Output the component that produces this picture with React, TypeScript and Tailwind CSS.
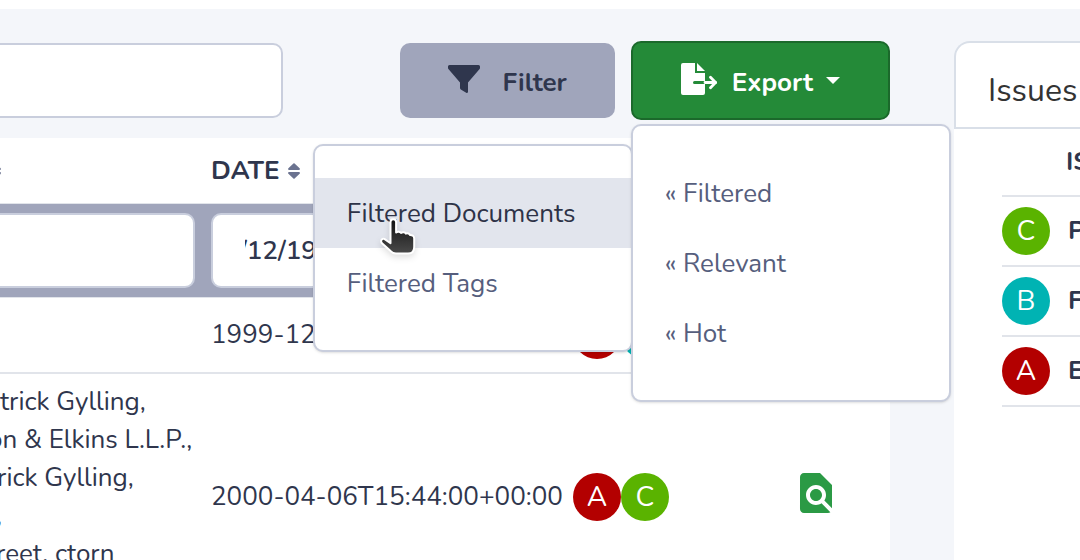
import clsx from "clsx";
import { MdFindInPage } from "react-icons/md";

type Letter = "A" | "B" | "C";

const badgeColors: Record<Letter, string> = {
    A: "bg-[#b30000]",
    B: "bg-[#00b3b3]",
    C: "bg-[#5ab300]",
};

const recipients = [
    { text: "trick Gylling,", className: "" },
    { text: "on & Elkins L.L.P.,", className: "-ml-3" },
    { text: "trick Gylling,", className: "-ml-3" },
    { text: ",", className: "-ml-1" },
    { text: "reet, ctorn", className: "-ml-1" },
];

const issues: { letter: Letter; name: string }[] = [
    { letter: "C", name: "Privileged" },
    { letter: "B", name: "Fraud" },
    { letter: "A", name: "Evidence" },
];

function Badge({ letter }: { letter: Letter }) {
    return (
        <span className={clsx("flex size-12 shrink-0 items-center justify-center rounded-full text-[28px] leading-none text-white", badgeColors[letter])}>
            {letter}
        </span>
    );
}

function SortIcon({ className }: { className?: string }) {
    return (
        <svg viewBox="0 0 12 16" className={clsx("h-4 w-3 shrink-0 fill-[#6b7390]", className)} aria-hidden="true">
            <path d="M5.4.4a1 1 0 0 1 1.2 0l5 4.8c.7.8.3 1.8-.6 1.8H1C.1 7-.3 6 .4 5.2z" />
            <path d="M5.4 15.6a1 1 0 0 0 1.2 0l5-4.8c.7-.8.3-1.8-.6-1.8H1c-.9 0-1.3 1-.6 1.8z" />
        </svg>
    );
}

function FilterIcon() {
    return (
        <svg viewBox="0 0 32 28" className="-mt-1 h-7 w-8 shrink-0 fill-current" aria-hidden="true">
            <path d="M1.6 0h28.8C31.4 0 32 .8 32 1.7v1c0 .5-.1.9-.4 1.3L20 17.600v9.200c0 1-1 1.500-1.800 1l-5.400-3.300c-.5-.3-.8-.8-.8-1.400v-5.500L.4 4C.1 3.600 0 3.200 0 2.700v-1C0 .8.6 0 1.600 0z" />
        </svg>
    );
}

function ExportIcon() {
    return (
        <svg viewBox="0 0 36 32" className="-mt-1 h-8 w-9 shrink-0" aria-hidden="true">
            <path d="M2 0h12v10h10v8H13.500a1.500 1.500 0 0 0 0 3H24v9a2 2 0 0 1-2 2H2a2 2 0 0 1-2-2V2a2 2 0 0 1 2-2z" fill="currentColor" />
            <path d="M16 0l8 8h-8z" fill="currentColor" />
            <path d="M24 19.500h11M29.500 14.200l5 5.300-5 5.300" fill="none" stroke="currentColor" strokeWidth="2.800" strokeLinecap="round" strokeLinejoin="round" />
        </svg>
    );
}

function HandCursor() {
    return (
        <svg viewBox="0 0 40 44" className="pointer-events-none absolute top-[70px] left-[64px] h-11 w-10 drop-shadow-md" aria-hidden="true">
            <defs>
                <linearGradient id="hand" x1="0" y1="0" x2="0" y2="1">
                    <stop offset="0" stopColor="#111" />
                    <stop offset="1" stopColor="#4a4a4a" />
                </linearGradient>
            </defs>
            <path
                d="M11.500 6a2.800 2.800 0 0 1 5.600 0v10.500c1.300-1.200 3.800-1.100 4.900.4 1.500-1 4-.7 4.900.7 1.600-.7 3.500 0 4 1.300 2.300-.1 4.300 1.200 4.300 3.600V31c0 4.200-2.300 6.500-6.200 6.500H17c-2.300 0-4-.8-5.400-2.400L3 27.200c-1.900-1.800-.5-5 2.300-4.300l6.200 4.300z"
                fill="url(#hand)"
                stroke="#fff"
                strokeWidth="2"
                strokeLinejoin="round"
            />
        </svg>
    );
}

function ExportMenu() {
    return (
        <div className="relative z-10">
            <button type="button" className="flex h-[79px] items-center rounded-[10px] border-2 border-[#1b692b] bg-[#248a38] px-12 text-[26px] font-bold text-white">
                <ExportIcon />
                <span className="ml-[15px] pt-1">Export</span>
                <span className="ml-[13px] border-x-[7px] border-t-[7px] border-x-transparent border-t-white" />
            </button>

            <div className="absolute top-full right-full mt-6 -mr-0.5 w-80 rounded-[10px] border-2 border-[#c9cedd] bg-white py-8 shadow-sm">
                <a href="#documents" className="block h-[70px] bg-[#e2e5ed] px-8 leading-[72px] text-[#2e3347]">Filtered Documents</a>
                <a href="#tags" className="block h-[70px] px-8 leading-[72px] text-[#565e7d]">Filtered Tags</a>
                <HandCursor />
            </div>

            <div className="absolute top-full left-0 mt-1 w-80 rounded-[10px] border-2 border-[#c9cedd] bg-white py-8 text-[#565e7d] shadow-sm">
                <a href="#filtered" className="block h-[70px] px-8 leading-[72px]">« Filtered</a>
                <a href="#relevant" className="block h-[70px] px-8 leading-[72px]">« Relevant</a>
                <a href="#hot" className="block h-[70px] px-8 leading-[72px]">« Hot</a>
            </div>
        </div>
    );
}

function DocumentsTable() {
    return (
        <table className="w-full table-fixed border-separate border-spacing-0 bg-white">
            <colgroup>
                <col className="w-[211px]" />
                <col className="w-[362px]" />
                <col />
                <col className="w-[106px]" />
            </colgroup>
            <thead>
                <tr className="h-[66px] text-left">
                    <th className="border-b border-[#e1e4ea] px-2"><SortIcon className="-ml-[11px]" /></th>
                    <th className="border-b border-[#e1e4ea] px-2">
                        <span className="flex items-center gap-[9px]">DATE <SortIcon /></span>
                    </th>
                    <th className="border-b border-[#e1e4ea]" />
                    <th className="border-b border-[#e1e4ea]" />
                </tr>
                <tr className="bg-[#a0a5bb]">
                    <td className="border-b border-[#e1e4ea] px-2 py-[9px]">
                        <input aria-label="Recipient" className="-ml-4 block h-[75px] w-[calc(100%+16px)] rounded-[10px] border-2 border-[#c9cedd] bg-white px-8" />
                    </td>
                    <td className="border-b border-[#e1e4ea] px-2 py-[9px]">
                        <input aria-label="Date" defaultValue="/12/1999" className="block h-[75px] w-full rounded-[10px] border-2 border-[#c9cedd] bg-white px-8 -indent-[6px] font-semibold" />
                    </td>
                    <td className="border-b border-[#e1e4ea]" />
                    <td className="border-b border-[#e1e4ea]" />
                </tr>
            </thead>
            <tbody>
                <tr className="h-[76px]">
                    <td className="border-b-2 border-[#e1e4ea]" />
                    <td className="border-b-2 border-[#e1e4ea] px-2 whitespace-nowrap">1999-12-10T08:00:00+00:00</td>
                    <td className="border-b-2 border-[#e1e4ea] px-2">
                        <div className="flex"><Badge letter="A" /><Badge letter="B" /></div>
                    </td>
                    <td className="border-b-2 border-[#e1e4ea]" />
                </tr>
                <tr className="h-[246px]">
                    <td className="px-2 pt-[9px] align-top leading-[38px] whitespace-nowrap">
                        {recipients.map((line, i) => (
                            <div key={i} className={line.className}>{line.text}</div>
                        ))}
                    </td>
                    <td className="px-2 whitespace-nowrap">2000-04-06T15:44:00+00:00</td>
                    <td className="px-2">
                        <div className="flex"><Badge letter="A" /><Badge letter="C" /></div>
                    </td>
                    <td className="px-2">
                        <a href="#preview" aria-label="Preview" className="block w-12">
                            <MdFindInPage className="-mt-2 size-12 text-[#2b9a45]" />
                        </a>
                    </td>
                </tr>
            </tbody>
        </table>
    );
}

function IssuesPanel() {
    return (
        <aside className="flex w-[126px] shrink-0 flex-col pt-8">
            <h2 className="flex h-[88px] items-center rounded-tl-2xl border-2 border-r-0 border-[#d9dfe8] bg-white pt-3 pl-8 text-[32px] text-[#333]">Issues</h2>
            <div className="flex-1 bg-white pl-12">
                <table className="w-full border-separate border-spacing-0 font-bold">
                    <thead>
                        <tr className="h-[68px] text-left">
                            <th className="border-b-2 border-[#e1e4ea]" />
                            <th className="border-b-2 border-[#e1e4ea] pl-4">ISSUE</th>
                        </tr>
                    </thead>
                    <tbody>
                        {issues.map(issue => (
                            <tr key={issue.letter} className="h-[70px]">
                                <td className="w-12 border-b-2 border-[#e1e4ea] font-normal"><Badge letter={issue.letter} /></td>
                                <td className="border-b-2 border-[#e1e4ea] pl-[18px]">{issue.name}</td>
                            </tr>
                        ))}
                    </tbody>
                </table>
            </div>
        </aside>
    );
}

export default function App() {
    return (
        <div className="flex h-screen flex-col overflow-hidden bg-[#f4f6fa] font-['Nunito','Lato',sans-serif] text-[26px] leading-[38px] text-[#2f364d]">
            <header className="h-[9px] shrink-0 bg-white" />
            <div className="flex min-h-0 flex-1 gap-16">
                <main className="min-w-0 flex-1 pt-8">
                    <div className="-ml-4 flex items-center">
                        <input aria-label="Search" className="h-[75px] min-w-0 flex-1 rounded-[10px] border-2 border-[#c9cedd] bg-white px-8" />
                        <button type="button" className="mr-4 ml-[117px] flex h-[75px] items-center gap-[22px] rounded-[10px] bg-[#a0a5bb] px-12 font-bold">
                            <FilterIcon />
                            <span className="pt-1">Filter</span>
                        </button>
                        <ExportMenu />
                    </div>
                    <div className="mt-[18px] -ml-2">
                        <DocumentsTable />
                    </div>
                </main>
                <IssuesPanel />
            </div>
        </div>
    );
}
